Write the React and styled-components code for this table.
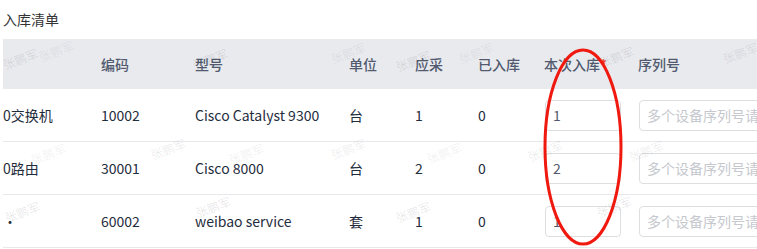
import React from "react";
import styled, { createGlobalStyle } from "styled-components";

const GlobalStyle = createGlobalStyle`
  html, body {
    margin: 0;
    padding: 0;
    background: #fff;
    overflow: hidden;
  }
  body {
    font-family: "Noto Sans CJK SC", "Noto Sans", sans-serif;
    font-size: 14px;
    color: #333;
  }
`;

const rows = [
  { name: "0交换机", code: "10002", model: "Cisco Catalyst 9300", unit: "台", plan: 1, done: 0, now: "1" },
  { name: "0路由", code: "30001", model: "Cisco 8000", unit: "台", plan: 2, done: 0, now: "2" },
  { name: "·", code: "60002", model: "weibao service", unit: "套", plan: 1, done: 0, now: "1" },
];

// faint repeated watermark: [left, top, opacity]
const marks = [
  [2, 50, 1], [38, 42, 0.5], [192, 50, 1], [330, 44, 0.6], [395, 52, 1], [458, 44, 0.5],
  [598, 48, 1], [722, 44, 0.8],
  [30, 145, 0.5], [150, 140, 0.8], [228, 145, 0.6], [330, 140, 0.7], [426, 144, 0.6],
  [527, 142, 0.8], [628, 142, 0.7],
  [4, 203, 1], [195, 198, 1], [395, 203, 1], [596, 198, 1],
];

export default function App() {
  return (
    <Page>
      <GlobalStyle />
      <Title>入库清单</Title>
      <Table>
        <HeadRow>
          <Cell />
          <Cell>编码</Cell>
          <Cell>型号</Cell>
          <Cell>单位</Cell>
          <Cell>应采</Cell>
          <Cell>已入库</Cell>
          <Cell>
            本次入库<Required>*</Required>
          </Cell>
          <Cell>序列号</Cell>
        </HeadRow>
        {rows.map((r) => (
          <BodyRow key={r.code}>
            <Cell>{r.name}</Cell>
            <Cell>{r.code}</Cell>
            <Cell>{r.model}</Cell>
            <Cell>{r.unit}</Cell>
            <Cell>{r.plan}</Cell>
            <Cell>{r.done}</Cell>
            <Cell>
              <Input $width={76} defaultValue={r.now} />
            </Cell>
            <Cell>
              <Input $width={160} placeholder="多个设备序列号请用逗号分隔" />
            </Cell>
          </BodyRow>
        ))}
      </Table>
      {marks.map(([x, y, o], i) => (
        <Watermark key={i} style={{ left: x, top: y, opacity: o }}>
          张鹏军
        </Watermark>
      ))}
      <Annotation width="757" height="249" viewBox="0 0 757 249">
        <ellipse cx="583" cy="147" rx="38" ry="97" fill="none" stroke="#f0190f" strokeWidth="3" />
      </Annotation>
    </Page>
  );
}

const Page = styled.div`
  position: relative;
  width: 757px;
  height: 249px;
  overflow: hidden;
  padding-left: 3px;
  box-sizing: border-box;
`;

const Title = styled.div`
  height: 39px;
  display: flex;
  align-items: center;
  padding-bottom: 1px;
  box-sizing: border-box;
  color: #333;
  font-size: 14px;
`;

const Table = styled.div`
  width: 900px;
`;

const Row = styled.div`
  display: grid;
  grid-template-columns: 98px 94px 154px 66px 63px 66px 94px 1fr;
  align-items: center;
`;

const HeadRow = styled(Row)`
  height: 50px;
  background: #e9eaee;
  color: #515a6e;
  font-weight: 500;
`;

const BodyRow = styled(Row)`
  height: 53px;
  border-bottom: 1px solid #e6e8eb;
  box-sizing: border-box;
  color: #1f2d3d;
`;

const Cell = styled.div`
  white-space: nowrap;
  overflow: hidden;
`;

const Required = styled.span`
  color: #ed4014;
`;

const Input = styled.input`
  width: ${(p) => p.$width}px;
  height: 31px;
  margin-left: 1px;
  box-sizing: border-box;
  border: 1px solid #dcdee2;
  border-radius: 4px;
  padding: 0 7px;
  font: inherit;
  font-size: 14px;
  color: #515a6e;
  background: #fff;
  outline: none;
  &::placeholder {
    color: #c5c8ce;
  }
`;

const Watermark = styled.span`
  position: absolute;
  font-size: 12px;
  color: rgba(0, 0, 0, 0.1);
  transform: rotate(-20deg);
  pointer-events: none;
  white-space: nowrap;
`;

const Annotation = styled.svg`
  position: absolute;
  left: 0;
  top: 0;
  pointer-events: none;
`;
